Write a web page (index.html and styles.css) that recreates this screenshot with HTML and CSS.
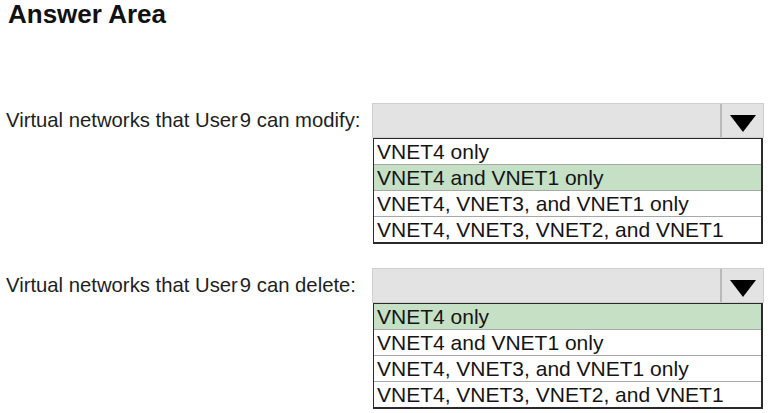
FILE: index.html
```html
<!DOCTYPE html>
<html>
<head>
<meta charset="utf-8">
<link rel="stylesheet" href="styles.css">
</head>
<body>
<h1 class="title">Answer Area</h1>
<div class="questions">
  <div class="question">
    <div class="label"><span class="label-text">Virtual networks that User<span class="gap">9</span> can modify:</span></div>
    <div class="dropdown">
      <div class="select">
        <div class="select-value"></div>
        <div class="select-arrow"><span class="triangle"></span></div>
      </div>
      <ul class="options">
        <li class="option">VNET4 only</li>
        <li class="option selected">VNET4 and VNET1 only</li>
        <li class="option">VNET4, VNET3, and VNET1 only</li>
        <li class="option">VNET4, VNET3, VNET2, and VNET1</li>
      </ul>
    </div>
  </div>
  <div class="question">
    <div class="label"><span class="label-text">Virtual networks that User<span class="gap">9</span> can delete:</span></div>
    <div class="dropdown">
      <div class="select">
        <div class="select-value"></div>
        <div class="select-arrow"><span class="triangle"></span></div>
      </div>
      <ul class="options">
        <li class="option selected">VNET4 only</li>
        <li class="option">VNET4 and VNET1 only</li>
        <li class="option">VNET4, VNET3, and VNET1 only</li>
        <li class="option">VNET4, VNET3, VNET2, and VNET1</li>
      </ul>
    </div>
  </div>
</div>
</body>
</html>
```
FILE: styles.css
```css
html, body {
  margin: 0;
  padding: 0;
  background: #ffffff;
  font-family: "Liberation Sans", Arial, sans-serif;
  color: #1a1a1a;
}

.title {
  margin: 0;
  padding: 0 0 2px 8px;
  font-size: 26px;
  line-height: 28px;
  font-weight: bold;
  color: #111;
}

.questions {
  display: flex;
  flex-direction: column;
  gap: 24px;
  margin-top: 73px;
}

.question {
  display: flex;
  align-items: flex-start;
}

.label {
  width: 366px;
  padding-left: 6px;
  height: 35px;
  display: flex;
  align-items: center;
  font-size: 20.3px;
  color: #1e1e1e;
  white-space: nowrap;
}

.gap {
  margin-left: 2px;
}

.dropdown {
  width: 392px;
  display: flex;
  flex-direction: column;
}

.select {
  height: 33px;
  background: #e3e3e3;
  border: 1px solid #cfcfcf;
  display: flex;
}

.select-value {
  flex: 1;
}

.select-arrow {
  width: 43px;
  border-left: 2px solid #b9b9b9;
  display: flex;
  justify-content: center;
  align-items: center;
  padding-top: 5px;
  box-sizing: border-box;
}

.triangle {
  width: 0;
  height: 0;
  border-left: 13px solid transparent;
  border-right: 13px solid transparent;
  border-top: 17px solid #000;
}

.options {
  list-style: none;
  margin: 0 0 0 1px;
  padding: 0;
  width: 390px;
  box-sizing: border-box;
  border: 1px solid #2a2a2a;
  border-right-width: 2px;
  border-bottom-width: 2px;
}

.option {
  height: 25px;
  line-height: 25px;
  padding-left: 3px;
  font-size: 21px;
  color: #141414;
  border-top: 1px solid #a8a8a8;
  white-space: nowrap;
}

.option:first-child {
  border-top: none;
}

.option.selected {
  background: #c6e0c5;
}
```
